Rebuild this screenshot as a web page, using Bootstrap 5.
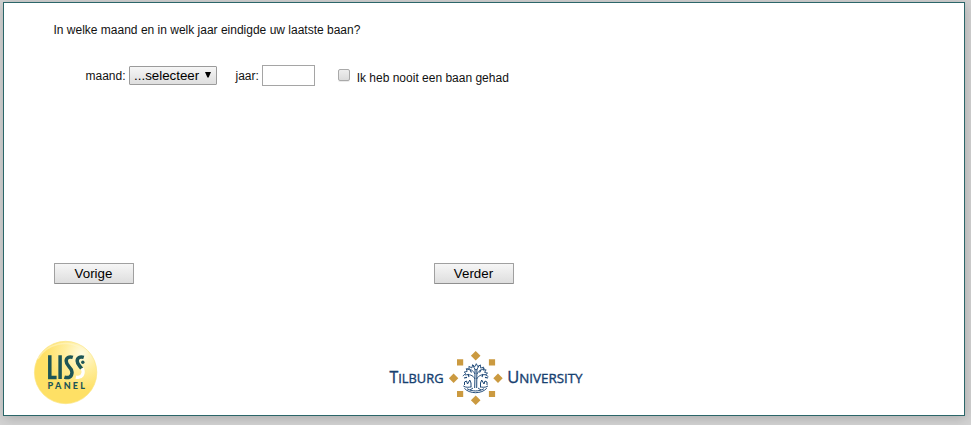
<!DOCTYPE html>
<html lang="nl">
<head>
<meta charset="utf-8">
<meta name="viewport" content="width=device-width, initial-scale=1">
<title>LISS panel</title>
<link href="https://cdn.jsdelivr.net/npm/bootstrap@5.3.0/dist/css/bootstrap.min.css" rel="stylesheet">
<style>
body{background:#d3d3d3;font:12px/16px "Liberation Sans",Arial,sans-serif;color:#111;height:425px;overflow:hidden}
.survey{width:962px;height:414px;margin:2px 0 0 3px;border:1px solid #2b6669;box-shadow:1px 2px 12px rgba(0,0,0,.2)}
.question{margin:19px 0 0 49.5px}
.answers{height:21px;margin:27px 0 0 81.5px}
.month-wrap{width:88px;height:19px;margin-left:3.5px}
.month{appearance:none;width:88px;height:19px;border:1px solid #9b9b9b;border-radius:1px;background:linear-gradient(#f6f6f6,#dedede);font:13.333px/17px "Liberation Sans",Arial,sans-serif;color:#000;padding:0 0 0 4px}
.month-arrow{right:6px;top:6px;pointer-events:none}
.year-label{margin-left:18.5px}
.year{width:53px;height:21px;border:1px solid #a5a5a5;margin-left:3px;padding:1px 3px;font-size:13.333px}
.never{appearance:none;width:12px;height:12px;border:1px solid #a9a9a9;border-radius:2px;background:linear-gradient(#eee,#dcdcdc);margin:-1px 6.8px 0 23px;box-shadow:0 1px 0 rgba(0,0,0,.08)}
.never:checked{background:#356}
.never-label{padding-top:4px}
.nav-row{margin:177px 0 0 50px;gap:300px}
.step{width:80px;height:21px;border:1px solid #a0a0a0;border-bottom-color:#8f8f8f;border-radius:1px;background:linear-gradient(#f6f6f6,#dedede);font:13.333px/18px "Liberation Sans",Arial,sans-serif;color:#000;padding:1px 1px 0 0}
.logos{margin:56px 0 0 29px}
.tilburg{margin-left:289px}
</style>
<script src="https://cdn.jsdelivr.net/npm/bootstrap@5.3.0/dist/js/bootstrap.bundle.min.js"></script>
</head>
<body>
<main class="survey bg-white d-flex flex-column">
  <p class="question">In welke maand en in welk jaar eindigde uw laatste baan?</p>
  <form class="answers d-flex align-items-center">
    <label for="maand">maand:</label>
    <div class="month-wrap position-relative d-flex">
      <select class="month" id="maand"><option>...selecteer</option></select>
      <svg class="month-arrow position-absolute" width="6" height="6" viewBox="0 0 6 6"><path d="M0 0h6L3.6 5.6H2.4z" fill="#000"/></svg>
    </div>
    <label class="year-label" for="jaar">jaar:</label>
    <input class="year" id="jaar" type="text">
    <input class="never" id="nooit" type="checkbox">
    <label class="never-label" for="nooit">Ik heb nooit een baan gehad</label>
  </form>
  <div class="nav-row d-flex">
    <button class="step" type="button">Vorige</button>
    <button class="step" type="button">Verder</button>
  </div>
  <footer class="logos d-flex align-items-start">
    <svg width="66" height="66" viewBox="33 340 66 66" role="img" aria-label="LISS panel">
      <defs>
        <radialGradient id="sun" cx=".76" cy=".2" r=".6"><stop offset="0" stop-color="#fffbe0"/><stop offset=".45" stop-color="#ffee9e"/><stop offset="1" stop-color="#fee065"/></radialGradient>
      </defs>
      <circle cx="65.6" cy="372.5" r="31.2" fill="url(#sun)" stroke="#fbe584" stroke-width=".7"/>
      <path d="M38 359C47 343 68 339 82 349" fill="none" stroke="#fff8cf" stroke-width="1.5" opacity=".5"/>
      <g fill="none" stroke="#1d5556" stroke-width="3.5">
        <path d="M49.8 355.3v22.2h6.8M60.1 355.3v23.8"/>
        <path d="M72.8 357.3c-3.8-1.2-6.6.4-6.6 3.8 0 5.6 5.8 5.6 5.8 11.2 0 4.7-3.4 6.2-7.6 4.8"/>
        <path d="M83.8 357.3c-3.8-1.2-6.6.4-6.6 3.8 0 3.6 2.8 4.8 4.4 7.4"/>
      </g>
      <path d="M82.3 368.4c2.4 5-.6 10.4-6.4 8.7" fill="none" stroke="#fff" stroke-width="3.2"/>
      <circle cx="82.8" cy="362.3" r="1.7" fill="#1d5556"/>
      <text x="47.6" y="389.3" textLength="37.4" font-family="Lato,sans-serif" font-size="9" font-weight="900" fill="#1d5556">PANEL</text>
    </svg>
    <svg class="tilburg" width="200" height="66" viewBox="388 340 200 66" role="img" aria-label="Tilburg University">
      <g fill="#164070" stroke="#164070" stroke-width=".35" font-family="'Open Sans','Noto Sans',sans-serif">
        <text x="389.5" y="382.6" textLength="54" lengthAdjust="spacingAndGlyphs" font-size="15.6">T<tspan font-size="12.6">ILBURG</tspan></text>
        <text x="507.2" y="382.6" textLength="75.3" lengthAdjust="spacingAndGlyphs" font-size="15.6">U<tspan font-size="12.6">NIVERSITY</tspan></text>
      </g>
      <path fill="#cb9a40" d="M475.7 351l4.8 4.8-4.8 4.8-4.8-4.8zM475.7 395.5l4.8 4.8-4.8 4.8-4.8-4.8zM453.6 373.5l4.7 4.7-4.7 4.7-4.7-4.7zM498 373.5l4.7 4.7-4.7 4.7-4.7-4.7zM457 359.3h6.2v6.2H457zM488.9 359.3h6.2v6.2h-6.2zM457 390.9h6.2v6.2H457zM488.9 390.9h6.2v6.2h-6.2z"/>
      <g fill="none" stroke="#1c4776" stroke-width=".95">
        <path d="M474.7 388l.4-19M476.7 388l.2-19" stroke-width="1"/>
        <path d="M475 379c-2-4-6-5-10-4M476.7 379c2-4 6-5 10-4M475 374c-2-4-5-5-8-5M477 374c2-4 5-5 8-5M475.5 370l-3-5M476.5 370l3-5M473 388l-3 2M478 388l3 2"/>
        <path d="M462.8 376l3-2.5-1.6-1.4 3-.7-1-2.7 3 .7-.3-3 3 1.5.7-3.2 2.2 2 1.5-3 1.5 3 2.6-1.8.3 3.2 3-1-.6 3 3-.3-1.5 2.6 3 .7-2 1.6 2.8 2" stroke-width=".9"/>
        <path d="M468 374l1 3M483 374l-1 3M470 370l1.5 2.5M481 370l-1.5 2.5M464 378l3-.6M488 378l-3-.6" stroke-width="1.1"/>
        <path d="M464.5 385v-3l2-1 1 3 2.3-4 1.2 3v4M487 385v-3l-2-1-1 3-2.3-4-1.2 3v4" stroke-width="1"/>
        <path d="M463.3 386c3 2 6 1 8 1M488 386c-3 2-6 1-8 1M464.3 388.2c5 6 17.5 6 22.5 0M467 388.7c5 3 12 3 17 0"/>
      </g>
    </svg>
  </footer>
</main>
</body>
</html>
